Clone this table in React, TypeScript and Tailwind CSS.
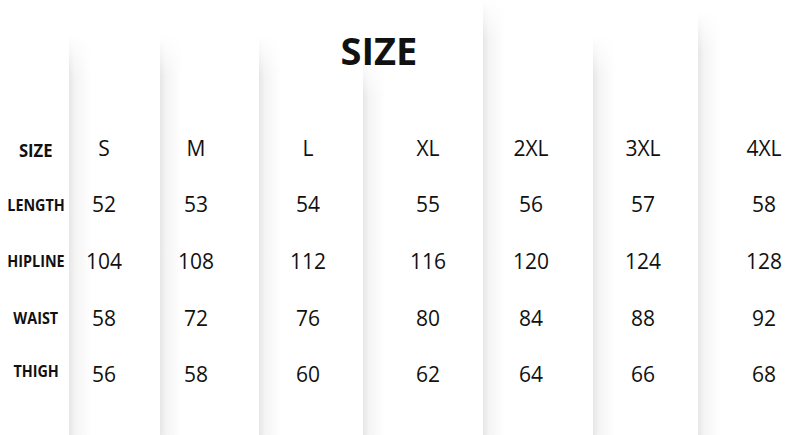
const sizes = ["S", "M", "L", "XL", "2XL", "3XL", "4XL"];

const rows = [
  { label: "LENGTH", values: [52, 53, 54, 55, 56, 57, 58], tweak: "" },
  { label: "HIPLINE", values: [104, 108, 112, 116, 120, 124, 128], tweak: "" },
  { label: "WAIST", values: [58, 72, 76, 80, 84, 88, 92], tweak: "" },
  { label: "THIGH", values: [56, 58, 60, 62, 64, 66, 68], tweak: "pb-[6px]" },
];

// one entry per size column: grid column, where the shade starts, where the text sits
const columns = [
  { col: "col-start-2", top: "h-[36px]", offset: "ml-[5px]" },
  { col: "col-start-3", top: "h-[36px]", offset: "ml-[6px]" },
  { col: "col-start-4", top: "h-[36px]", offset: "ml-[19px]" },
  { col: "col-start-5", top: "h-[58px]", offset: "ml-[35px]" },
  { col: "col-start-6", top: "h-[0px]", offset: "ml-[18px]" },
  { col: "col-start-7", top: "h-[36px]", offset: "ml-[20px]" },
  { col: "col-start-8", top: "h-[12px]", offset: "ml-[36px]" },
];

const rowStarts = ["row-start-2", "row-start-3", "row-start-4", "row-start-5", "row-start-6"];

function Cell({ col, row, offset, children }: { col: string; row: string; offset: string; children: React.ReactNode }) {
  return (
    <div className={`${col} ${row} flex items-center`}>
      <span className={`${offset} w-[60px] text-center text-[21px] leading-none text-[#111]`}>{children}</span>
    </div>
  );
}

export default function App() {
  return (
    <div
      className="grid h-[435px] w-[800px] grid-cols-[69px_91px_99px_104px_120px_110px_105px_102px] grid-rows-[120px_repeat(5,56.6px)_1fr] overflow-hidden bg-white"
      style={{ fontFamily: '"Open Sans", "Noto Sans", sans-serif' }}
    >
      {/* shaded strips behind each size column */}
      {columns.map((c) => (
        <div
          key={c.col}
          className={`${c.col} row-span-full flex flex-col bg-[linear-gradient(to_right,#e6e6e6_0px,#f4f4f4_6px,#ffffff_22px)]`}
        >
          <div className={`${c.top} shrink-0 bg-white`} />
          <div className="h-[40px] shrink-0 bg-linear-to-b from-white to-white/0" />
        </div>
      ))}

      <div className="col-span-2 col-start-4 row-start-1 self-start pl-[16px] pt-[30px] text-center text-[38px] font-bold leading-[40px] text-[#111]">
        SIZE
      </div>

      <div className="col-start-1 row-start-2 flex items-center justify-center pl-[3px] pt-[5px] text-[17.5px] font-bold leading-none text-[#111]">
        <span className="inline-block scale-x-[0.95]">SIZE</span>
      </div>
      {sizes.map((s, i) => (
        <Cell key={s} col={columns[i].col} row={rowStarts[0]} offset={columns[i].offset}>
          {s}
        </Cell>
      ))}

      {rows.map((r, ri) => (
        <div key={r.label} className="contents">
          <div
            className={`col-start-1 ${rowStarts[ri + 1]} flex items-center justify-center pl-[3px] ${r.tweak} text-[16.5px] font-bold leading-none text-[#111]`}
          >
            <span className="inline-block scale-x-[0.87] whitespace-nowrap">{r.label}</span>
          </div>
          {r.values.map((v, i) => (
            <Cell key={i} col={columns[i].col} row={rowStarts[ri + 1]} offset={columns[i].offset}>
              {v}
            </Cell>
          ))}
        </div>
      ))}
    </div>
  );
}
